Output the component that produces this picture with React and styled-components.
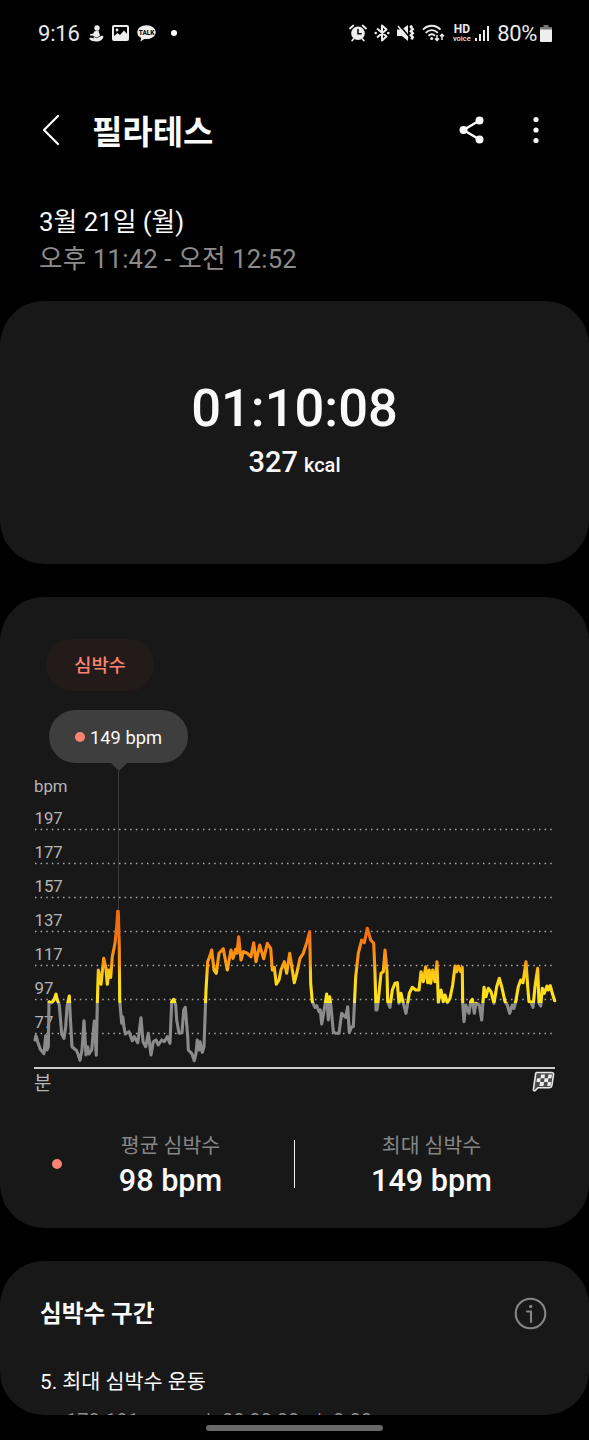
import React from 'react';
import styled, { createGlobalStyle } from 'styled-components';

const GlobalStyle = createGlobalStyle`
  * {
    box-sizing: border-box;
  }
  body {
    margin: 0;
    background: #000;
    color: #fafafa;
    font-family: Roboto, 'Noto Sans CJK KR', sans-serif;
  }
  h1, h2, p {
    margin: 0;
  }
  svg {
    display: block;
    flex: none;
  }
`;

const Screen = styled.div`
  width: 589px;
  height: 1440px;
  overflow: hidden;
  display: flex;
  flex-direction: column;
`;

const StatusBar = styled.div`
  height: 66px;
  padding: 0 37px 0 38px;
  display: flex;
  align-items: center;
  justify-content: space-between;
  font-size: 22px;
  line-height: 26px;
  color: #e9e9e9;
`;

const StatusGroup = styled.div`
  display: flex;
  align-items: center;
  gap: ${({ $gap }) => $gap}px;
`;

const StatusTime = styled.span`
  width: 41px;
  margin-right: 2px;
  padding-top: 1px;
  letter-spacing: -0.2px;
`;

const Battery = styled.span`
  display: flex;
  align-items: center;
  gap: 3px;
  padding-top: 1px;
  letter-spacing: -0.4px;
`;

const HdVoice = styled.span`
  display: flex;
  flex-direction: column;
  align-items: center;
  width: 19px;
  margin-right: -4px;
  font-size: 12px;
  line-height: 10px;
  font-weight: 700;

  small {
    font-size: 7.5px;
    line-height: 9px;
    font-weight: 500;
  }
`;

const NotificationDot = styled.i`
  width: 6px;
  height: 6px;
  margin-left: 7px;
  border-radius: 50%;
  background: #fff;
`;

const Header = styled.header`
  height: 128px;
  padding: 0 50px 0 41px;
  display: flex;
  align-items: center;
`;

const Title = styled.h1`
  flex: 1;
  margin-left: 32px;
  padding-top: 5px;
  font-size: 33px;
  line-height: 48px;
  font-weight: 700;
`;

const HeaderActions = styled.div`
  display: flex;
  align-items: center;
  gap: 48px;
`;

const Period = styled.section`
  height: 107px;
  padding: 10px 39px 0;
`;

const PeriodDate = styled.p`
  font-size: 25.8px;
  line-height: 37px;
`;

const PeriodTime = styled.p`
  font-size: 25.6px;
  line-height: 37px;
  letter-spacing: 0.2px;
  color: #8c8c8c;
`;

const Card = styled.section`
  flex: none;
  height: ${({ $height }) => $height}px;
  margin-bottom: 33px;
  border-radius: 44px;
  background: #181818;
  overflow: hidden;
`;

const Summary = styled(Card)`
  display: flex;
  flex-direction: column;
  align-items: center;
  padding-top: 76px;
`;

const Duration = styled.p`
  font-size: 52.5px;
  line-height: 62px;
  font-weight: 500;
`;

const Calories = styled.p`
  margin-top: 6px;
  font-size: 29px;
  line-height: 34px;
  font-weight: 500;

  small {
    margin-left: 6px;
    font-size: 20px;
  }
`;

const HeartTab = styled.div`
  width: 108px;
  height: 52px;
  margin: 42px 0 0 46px;
  padding-top: 2px;
  border-radius: 26px;
  background: #231b19;
  color: #fd8272;
  font-size: 18.7px;
  line-height: 51px;
  font-weight: 500;
  text-align: center;
`;

const Tooltip = styled.div`
  position: relative;
  width: 139px;
  height: 53px;
  margin: 19px 0 0 49px;
  border-radius: 27px;
  background: #3e3e3e;
  display: flex;
  align-items: center;
  justify-content: center;
  gap: 5px;
  font-size: 18.3px;
  padding-top: 2px;

  &::after {
    content: '';
    position: absolute;
    top: 100%;
    left: 62px;
    border: 8px solid transparent;
    border-top-color: #3e3e3e;
    border-bottom: 0;
  }
`;

const HeartDot = styled.i`
  width: 10px;
  height: 10px;
  margin-bottom: 2px;
  border-radius: 50%;
  background: #fd8272;
`;

const Stats = styled.div`
  display: grid;
  grid-template-columns: 294px 1px 1fr;
  padding-top: 31px;
`;

const Divider = styled.div`
  height: 48px;
  margin-top: 9px;
  background: #eee;
`;

const Stat = styled.div`
  display: flex;
  align-items: center;
  padding-left: ${({ $indent }) => $indent}px;
`;

const StatText = styled.div`
  width: 132px;
  margin-left: ${({ $gap }) => $gap}px;
  text-align: center;
  white-space: nowrap;
`;

const StatLabel = styled.p`
  padding-top: 1px;
  font-size: 20.5px;
  line-height: 28px;
  color: #868686;
`;

const StatValue = styled.p`
  margin-top: 3px;
  font-size: 30.6px;
  line-height: 36px;
  font-weight: 500;
`;

const Zones = styled(Card)`
  margin-bottom: 0;
  padding: 0 42px 0 40px;
`;

const ZonesHead = styled.div`
  display: flex;
  align-items: center;
  justify-content: space-between;
  height: 34px;
  margin-top: 35px;
`;

const ZonesTitle = styled.h2`
  padding-top: 2px;
  font-size: 23.6px;
  line-height: 34px;
  font-weight: 700;
`;

const ZoneName = styled.p`
  margin-top: 37px;
  font-size: 20.7px;
  line-height: 30px;
`;

const ZoneDetail = styled.div`
  display: grid;
  grid-template-columns: 140px 16px 95px 16px auto;
  margin: 10px 0 0 26px;
  font-size: 20px;
  line-height: 28px;
  color: #8c8c8c;
`;

const HomeBar = styled.div`
  flex: none;
  width: 177px;
  height: 6px;
  margin: 10px auto 0;
  border-radius: 3px;
  background: #686868;
`;

const GRID = [197, 177, 157, 137, 117, 97, 77];

// heart rate trace, [time, offset from the top], three units to a pixel
const TRACE = [
  {
    start: 0,
    samples: [
      [30, 450], [33, 437], [38, 455], [46, 478], [57, 491], [62, 437], [66, 480], [70, 470], [72, 335], [80, 338],
      [87, 330], [93, 312], [97, 330], [103, 345], [110, 432], [117, 445], [122, 410], [126, 350], [133, 318],
      [136, 380], [141, 470], [155, 482], [160, 495], [165, 511], [171, 480], [177, 392], [183, 495], [188, 470],
      [192, 492], [200, 480], [208, 393], [214, 496], [217, 340], [220, 240], [228, 283], [236, 205], [243, 235],
      [247, 283], [252, 240], [257, 262], [262, 200], [270, 160], [275, 110], [278, 64], [280, 64], [283, 170],
      [284, 330], [290, 400], [293, 380], [297, 410], [301, 432], [312, 425], [322, 452], [328, 440], [338, 458],
      [343, 425], [348, 383], [354, 455], [362, 470], [370, 430], [378, 495], [385, 455], [393, 450], [400, 465],
      [410, 450], [418, 455], [427, 440], [435, 460], [440, 335], [446, 328], [452, 345], [455, 390], [462, 430],
      [471, 428], [476, 360], [481, 352], [488, 440], [490, 480], [500, 490], [508, 512],
    ],
  },
  {
    start: 510,
    samples: [
      [3, 490], [7, 450], [12, 480], [15, 455], [22, 487], [27, 470], [33, 300], [38, 215], [44, 200], [50, 180],
      [57, 240], [64, 250], [72, 190], [85, 176], [92, 215], [97, 240], [108, 180], [114, 205], [122, 178],
      [126, 190], [131, 140], [138, 210], [145, 185], [157, 190], [168, 200], [176, 158], [183, 215], [194, 165],
      [206, 206], [217, 160], [227, 175], [232, 240], [238, 232], [244, 283], [252, 270], [258, 240], [268, 215],
      [275, 250], [284, 190], [298, 278], [305, 250], [315, 205], [325, 190], [335, 158], [344, 125], [347, 280],
      [352, 335], [360, 352], [365, 347], [372, 365], [376, 360], [380, 402], [390, 345], [395, 312], [400, 390],
      [404, 320], [408, 350], [415, 425], [422, 430], [432, 430], [440, 370], [452, 382], [458, 350], [463, 427],
      [470, 410], [475, 410], [482, 260], [490, 190], [500, 150], [508, 158], [517, 115], [527, 150], [536, 160],
      [540, 250], [543, 360],
    ],
  },
  {
    start: 1050,
    samples: [
      [6, 360], [10, 330], [18, 250], [25, 245], [30, 180], [36, 245], [38, 335], [45, 352], [52, 300], [60, 280],
      [67, 278], [72, 340], [78, 310], [85, 340], [93, 370], [103, 310], [112, 292], [122, 300], [132, 300],
      [138, 245], [145, 275], [152, 230], [158, 278], [163, 240], [167, 280], [173, 240], [180, 275], [186, 215],
      [190, 337], [198, 300], [205, 335], [210, 315], [217, 338], [225, 325], [233, 285], [240, 228], [245, 245],
      [250, 228], [257, 245], [262, 232], [263, 340], [267, 395], [272, 345], [282, 370], [287, 335], [292, 328],
      [298, 370], [303, 340], [313, 345], [320, 390], [327, 292], [333, 320], [340, 295], [348, 305], [357, 340],
      [365, 290], [373, 265], [380, 290], [390, 335], [397, 345], [404, 370], [412, 345], [417, 355], [422, 335],
      [430, 290], [437, 270], [444, 278], [453, 215], [458, 290], [462, 335], [467, 335], [474, 352], [480, 290],
      [488, 235], [492, 340], [497, 348], [502, 295], [508, 310], [516, 288], [520, 300], [526, 287], [532, 310],
      [539, 332],
    ],
  },
];

const tracePoints = TRACE.flatMap(({ start, samples }) =>
  samples.map(([x, y]) => `${(25 + (start + x) / 3).toFixed(1)},${(127 + y / 3).toFixed(1)}`)
).join(' ');

const HeartChart = () => (
  <svg width="589" height="337" viewBox="0 0 589 337">
    <defs>
      <linearGradient id="zones" gradientUnits="userSpaceOnUse" x1="0" y1="145" x2="0" y2="313">
        <stop offset="0" stopColor="#ee6a0c" />
        <stop offset="0.16" stopColor="#f36f14" />
        <stop offset="0.25" stopColor="#fb8c10" />
        <stop offset="0.33" stopColor="#fb9a12" />
        <stop offset="0.38" stopColor="#fdc414" />
        <stop offset="0.45" stopColor="#fedb16" />
        <stop offset="0.565" stopColor="#ffe51f" />
        <stop offset="0.565" stopColor="#8b8b8b" />
        <stop offset="1" stopColor="#8b8b8b" />
      </linearGradient>
    </defs>
    <g fill="#b5b5b5" fontSize="16.8">
      <text x="34" y="28.6">bpm</text>
      {GRID.map((bpm, i) => (
        <text key={bpm} x="34.5" y={61.4 + i * 34}>
          {bpm}
        </text>
      ))}
      <text x="34" y="326.6" fontSize="19">
        분
      </text>
    </g>
    {GRID.map((bpm, i) => (
      <path key={bpm} d={`M35 ${66.5 + i * 34}H552`} stroke="#aaa" strokeWidth="1.4" strokeDasharray="1.5 4.1" />
    ))}
    <path d="M118.5 8V147" stroke="#3c3c3c" />
    <polyline
      points={tracePoints}
      fill="none"
      stroke="url(#zones)"
      strokeWidth="3.1"
      strokeLinejoin="round"
      strokeLinecap="round"
    />
    <path d="M34 305H555" stroke="#c9cccc" strokeWidth="1.8" />
    <path
      d="M536.5 309.5h15q2.5 0 2 2.5l-1.6 10.5q-.4 2.3-2.8 2.3H538l-2.5 2.6q-2.5 1-2-1.5l2-14q.2-2.4 1-2.4z"
      fill="#4a4a4a"
      stroke="#e8e8e8"
      strokeWidth="1.6"
    />
    <path
      d="M541 311.5h4l-.5 3.8h-4zM548.5 311.5h3.5l-.6 3.8h-3.7zM544.5 315.3h4l-.5 3.8h-4zM537 315.3h3.7l-.5 3.8h-3.7zM540 319.1h4l-.5 3.8h-4zM547.8 319.1h3.3l-.5 3.8h-3.4z"
      fill="#eee"
    />
  </svg>
);

const MindfulIcon = () => (
  <svg width="15" height="17" viewBox="0 0 15 17" fill="#eee">
    <circle cx="8" cy="3" r="2.7" />
    <path d="M5 6.5 9.5 5.500l1.500 5-1.500 2L13 10.500l1.500 1c-.7 3-3.500 5-7 5-3 0-6-.8-7.300-2.500L1 12.500l4 1-.7-3-3 .2-.3-1.500 3.500-.7z" />
    <path d="M4.500 11.500l3.500 1.500 2-1.500" stroke="#000" strokeWidth=".6" fill="none" />
  </svg>
);

const PictureIcon = () => (
  <svg width="17" height="16" viewBox="0 0 17 16">
    <rect x="1" y="1" width="15" height="14" rx="1" fill="none" stroke="#eee" strokeWidth="2" />
    <circle cx="5" cy="5" r="1.4" fill="#eee" />
    <path d="M2 11 5.500 8l2.500 2L12 5.500l4 4.500v5H2z" fill="#eee" />
  </svg>
);

const TalkIcon = () => (
  <svg width="19" height="17" viewBox="0 0 19 17">
    <path d="M9.500.3C4.300.3.300 3.400.300 7.200c0 2.500 1.600 4.600 4 5.800l-.9 3.500 4-2.500c5.900.6 11.300-2.300 11.300-6.800C18.700 3.400 14.700.3 9.500.3z" fill="#eee" />
    <text x="9.5" y="9.6" fontSize="6.4" fontWeight="900" textAnchor="middle" fill="#111">
      TALK
    </text>
  </svg>
);

const AlarmIcon = () => (
  <svg width="18" height="18" viewBox="0 0 18 18" fill="none" stroke="#eee" strokeLinecap="round">
    <circle cx="9" cy="9.3" r="6.8" fill="#eee" stroke="none" />
    <path d="M1 4.500 4.300 1.500M17 4.500 13.700 1.500M4.500 15l-1.300 1.500M13.500 15l1.300 1.500" strokeWidth="1.8" />
    <path d="M9 5.500v4.200h3.200" stroke="#000" strokeWidth="1.5" />
  </svg>
);

const BluetoothIcon = () => (
  <svg width="16" height="18" viewBox="0 0 16 18" fill="none" stroke="#eee" strokeWidth="2">
    <path d="M3 4.500l9.500 8L8 16.500v-15l4.500 4L3 13.500" strokeLinejoin="round" />
    <circle cx="1.7" cy="9" r="1.3" fill="#eee" stroke="none" />
    <circle cx="14.3" cy="9" r="1.3" fill="#eee" stroke="none" />
  </svg>
);

const VibrateIcon = () => (
  <svg width="18" height="18" viewBox="0 0 18 18" fill="none" stroke="#eee">
    <path d="M0 5.500h4.500L11 1v16l-6-5H0z" fill="#eee" stroke="none" />
    <path d="M2.500 1 12 12.500" stroke="#000" strokeWidth="1.6" />
    <path d="M1 2 11 14.500" strokeWidth="1.5" />
    <path d="M15 1.500l-1.200 1.500 2 2.200-2 2 2 2-2 2 2 2-1.300 2.300" strokeWidth="2.4" />
  </svg>
);

const WifiIcon = () => (
  <svg width="23" height="18" viewBox="0 0 23 18" fill="none" stroke="#eee" strokeWidth="1.9">
    <path d="M1 5.700c5-5.200 12.500-5.200 17.500 0M3.700 8.800c3.600-3.600 8.500-3.600 12.100 0M6.500 11.700c2-1.900 4.500-1.900 6.500 0" />
    <circle cx="9.7" cy="14.5" r="1.5" fill="#eee" stroke="none" />
    <path d="M15 11v5.500M13 14.500l2 2 2-2M20 16V10.500M18 12.300l2-2 2 2" strokeWidth="1.5" />
  </svg>
);

const SignalIcon = () => (
  <svg width="16" height="17" viewBox="0 0 16 17" fill="#eee">
    <rect x="1" y="13" width="2" height="3" />
    <rect x="5" y="9" width="2" height="7" />
    <rect x="9" y="5" width="2" height="11" />
    <rect x="13" y="1" width="2" height="15" />
  </svg>
);

const BatteryIcon = () => (
  <svg width="12" height="17" viewBox="0 0 12 17">
    <path d="M3.500 0h5v2H12v3H0V2h3.500z" fill="#777" />
    <path d="M0 4.500h12V16q0 1-1 1H1q-1 0-1-1z" fill="#eee" />
  </svg>
);

const BackIcon = () => (
  <svg width="19" height="32" viewBox="0 0 19 32" fill="none" stroke="#fafafa" strokeWidth="2.3">
    <path d="M17 2 3 16l14 14" strokeLinecap="round" strokeLinejoin="round" />
  </svg>
);

const ShareIcon = () => (
  <svg width="26" height="28" viewBox="0 0 26 28" fill="#fafafa">
    <path d="M20.500 4.500 4.500 14l16 9.500" fill="none" stroke="#fafafa" strokeWidth="2.5" />
    <circle cx="4.5" cy="14" r="4" />
    <circle cx="20.5" cy="4.5" r="4" />
    <circle cx="20.5" cy="23.5" r="4" />
  </svg>
);

const MoreIcon = () => (
  <svg width="6" height="28" viewBox="0 0 6 28" fill="#fafafa">
    <circle cx="3" cy="3.5" r="2.6" />
    <circle cx="3" cy="14" r="2.6" />
    <circle cx="3" cy="24.5" r="2.6" />
  </svg>
);

const InfoIcon = () => (
  <svg width="33" height="33" viewBox="0 0 33 33" fill="none" stroke="#868686" strokeWidth="2.1">
    <circle cx="16.5" cy="16.5" r="14.8" />
    <path d="M13 14.500h4V25" strokeLinecap="round" />
    <circle cx="16.7" cy="9.5" r="1.7" fill="#868686" stroke="none" />
  </svg>
);

const App = () => (
  <Screen>
    <GlobalStyle />
    <StatusBar>
      <StatusGroup $gap={8}>
        <StatusTime>9:16</StatusTime>
        <MindfulIcon />
        <PictureIcon />
        <TalkIcon />
        <NotificationDot />
      </StatusGroup>
      <StatusGroup $gap={7}>
        <AlarmIcon />
        <BluetoothIcon />
        <VibrateIcon />
        <WifiIcon />
        <HdVoice>
          HD<small>voice</small>
        </HdVoice>
        <SignalIcon />
        <Battery>
          80%
          <BatteryIcon />
        </Battery>
      </StatusGroup>
    </StatusBar>
    <Header>
      <BackIcon />
      <Title>필라테스</Title>
      <HeaderActions>
        <ShareIcon />
        <MoreIcon />
      </HeaderActions>
    </Header>
    <Period>
      <PeriodDate>3월 21일 (월)</PeriodDate>
      <PeriodTime>오후 11:42 - 오전 12:52</PeriodTime>
    </Period>
    <Summary $height={263}>
      <Duration>01:10:08</Duration>
      <Calories>
        327<small>kcal</small>
      </Calories>
    </Summary>
    <Card $height={631}>
      <HeartTab>심박수</HeartTab>
      <Tooltip>
        <HeartDot />
        149 bpm
      </Tooltip>
      <HeartChart />
      <Stats>
        <Stat $indent={52}>
          <HeartDot />
          <StatText $gap={42.5}>
            <StatLabel>평균 심박수</StatLabel>
            <StatValue>98 bpm</StatValue>
          </StatText>
        </Stat>
        <Divider />
        <Stat $indent={0}>
          <StatText $gap={70.5}>
            <StatLabel>최대 심박수</StatLabel>
            <StatValue>149 bpm</StatValue>
          </StatText>
        </Stat>
      </Stats>
    </Card>
    <Zones $height={154}>
      <ZonesHead>
        <ZonesTitle>심박수 구간</ZonesTitle>
        <InfoIcon />
      </ZonesHead>
      <ZoneName>5. 최대 심박수 운동</ZoneName>
      <ZoneDetail>
        <span>178-191</span>
        <span>|</span>
        <span>00:00:00</span>
        <span>|</span>
        <span>0.00</span>
      </ZoneDetail>
    </Zones>
    <HomeBar />
  </Screen>
);

export default App;
